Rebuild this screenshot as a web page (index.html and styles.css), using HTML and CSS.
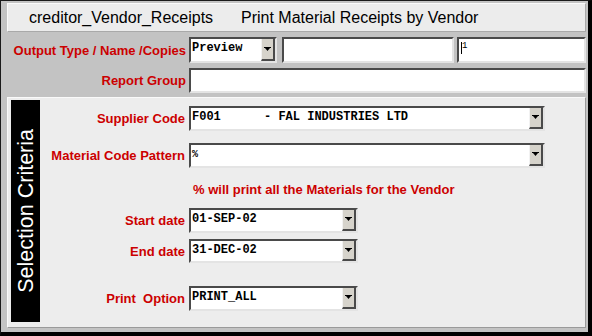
FILE: index.html
```html
<!DOCTYPE html>
<html>
<head>
<meta charset="utf-8">
<link rel="stylesheet" href="styles.css">
</head>
<body>
<div class="window">
  <div class="titlebar">
    <span class="title-main">creditor_Vendor_Receipts</span>
    <span class="title-sub">Print Material Receipts by Vendor</span>
  </div>

  <div class="top-form">
    <div class="row row-output">
      <span class="lbl lbl-top">Output Type / Name /Copies</span>
      <div class="field select f-type"><span class="val">Preview</span><span class="btn"><svg width="7" height="5" viewBox="0 0 7 5"><rect x="0" y="0" width="7" height="1" fill="#000"/><polygon points="1,1 6,1 3.5,4" fill="#000"/></svg></span></div>
      <div class="field f-name"></div>
      <div class="field f-copies"><span class="caret"></span><span class="tiny">1</span></div>
    </div>
    <div class="row row-group">
      <span class="lbl lbl-top">Report Group</span>
      <div class="field f-group"></div>
    </div>
  </div>

  <div class="panel">
    <div class="bar"><span class="bar-text">Selection Criteria</span></div>
    <div class="criteria">
      <div class="crow c-supplier">
        <span class="lbl">Supplier Code</span>
        <div class="field select f-wide"><span class="val">F001      - FAL INDUSTRIES LTD</span><span class="btn"><svg width="7" height="5" viewBox="0 0 7 5"><rect x="0" y="0" width="7" height="1" fill="#000"/><polygon points="1,1 6,1 3.5,4" fill="#000"/></svg></span></div>
      </div>
      <div class="crow c-material">
        <span class="lbl">Material Code Pattern</span>
        <div class="field select f-wide"><span class="val val-small">%</span><span class="btn"><svg width="7" height="5" viewBox="0 0 7 5"><rect x="0" y="0" width="7" height="1" fill="#000"/><polygon points="1,1 6,1 3.5,4" fill="#000"/></svg></span></div>
      </div>
      <div class="hint">% will print all the Materials for the Vendor</div>
      <div class="crow c-start">
        <span class="lbl">Start date</span>
        <div class="field select f-date"><span class="val">01-SEP-02</span><span class="btn"><svg width="7" height="5" viewBox="0 0 7 5"><rect x="0" y="0" width="7" height="1" fill="#000"/><polygon points="1,1 6,1 3.5,4" fill="#000"/></svg></span></div>
      </div>
      <div class="crow c-end">
        <span class="lbl">End date</span>
        <div class="field select f-date"><span class="val">31-DEC-02</span><span class="btn"><svg width="7" height="5" viewBox="0 0 7 5"><rect x="0" y="0" width="7" height="1" fill="#000"/><polygon points="1,1 6,1 3.5,4" fill="#000"/></svg></span></div>
      </div>
      <div class="crow c-print">
        <span class="lbl">Print&nbsp; Option</span>
        <div class="field select f-date"><span class="val">PRINT_ALL</span><span class="btn"><svg width="7" height="5" viewBox="0 0 7 5"><rect x="0" y="0" width="7" height="1" fill="#000"/><polygon points="1,1 6,1 3.5,4" fill="#000"/></svg></span></div>
      </div>
    </div>
  </div>
</div>
</body>
</html>
```

FILE: styles.css
```css
* { box-sizing: border-box; }

html, body {
  margin: 0;
  padding: 0;
  background: #000;
}

body {
  width: 592px;
  height: 336px;
  overflow: hidden;
  font-family: "Liberation Sans", Arial, sans-serif;
}

.window {
  width: 592px;
  height: 336px;
  background: #c3c3c3;
  border-top: 1px solid #1a1a1a;
  border-left: 1px solid #1a1a1a;
  border-right: 4px solid #000;
  border-bottom: 4px solid #000;
  padding: 2px 2px 4px 6px;
  display: flex;
  flex-direction: column;
}

.titlebar {
  height: 29px;
  flex: none;
  background: #ececec;
  border-top: 1px solid #fafafa;
  border-left: 1px solid #fafafa;
  border-bottom: 1px solid #a9a9a9;
  border-right: 1px solid #a9a9a9;
  display: flex;
  align-items: center;
  font-size: 16px;
  color: #000;
  padding-left: 21px;
}

.title-main { width: 212px; }

.top-form {
  margin-top: 5px;
  display: flex;
  flex-direction: column;
  gap: 5px;
}

.row {
  display: flex;
  align-items: center;
}

.row-output { height: 26px; }
.row-group { height: 25px; }

.lbl {
  color: #cc0000;
  font-weight: bold;
  font-size: 13px;
  text-align: right;
  white-space: nowrap;
  flex: none;
}

.lbl-top {
  width: 179px;
  margin-right: 3px;
}

.field {
  height: 100%;
  background: #fff;
  border-top: 2px solid #4a4a4a;
  border-left: 2px solid #4a4a4a;
  border-bottom: 2px solid #e4e4e4;
  border-right: 2px solid #e4e4e4;
  display: flex;
  align-items: flex-start;
  flex: none;
}

.select .val {
  flex: 1;
  font-family: "Liberation Mono", "Courier New", monospace;
  font-weight: bold;
  font-size: 12px;
  line-height: 14px;
  padding: 2px 0 0 1px;
  white-space: pre;
  color: #000;
}

.select .val-small {
  font-size: 10px;
  padding-top: 3px;
}

.btn {
  width: 14px;
  height: 100%;
  background: #d6d3cb;
  border-left: 1px solid #f2f2f2;
  border-right: 2px solid #4a4a4a;
  border-bottom: 2px solid #4a4a4a;
  display: flex;
  align-items: center;
  justify-content: center;
  flex: none;
}

.btn svg { display: block; }

.f-type { width: 88px; }
.f-name { width: 172px; margin-left: 5px; }
.f-copies {
  flex: 1;
  margin-left: 3px;
  align-items: flex-start;
  padding: 3px 0 0 2px;
}

.caret {
  width: 1px;
  height: 12px;
  background: #000;
}

.tiny {
  font-family: "Liberation Mono", monospace;
  font-size: 9px;
  line-height: 9px;
  color: #000;
}

.f-group { flex: 1; }

.panel {
  flex: 1;
  margin-top: 4px;
  background: #ededed;
  border-top: 1px solid #fafafa;
  border-left: 1px solid #fafafa;
  border-bottom: 1px solid #9a9a9a;
  border-right: 1px solid #9a9a9a;
  display: flex;
}

.bar {
  width: 29px;
  margin: 2px 0 5px 3px;
  background: #000;
  display: flex;
  align-items: center;
  justify-content: center;
  flex: none;
}

.bar-text {
  writing-mode: vertical-rl;
  transform: rotate(180deg);
  color: #fff;
  font-size: 21.5px;
  white-space: nowrap;
  margin-left: 1px;
}

.criteria {
  flex: 1;
  padding-top: 8px;
  display: flex;
  flex-direction: column;
}

.crow {
  display: flex;
  align-items: center;
  height: 25px;
}

.crow .lbl {
  width: 145px;
  margin-right: 4px;
}

.c-material { margin-top: 12px; }
.c-start { margin-top: 10px; height: 25px; }
.c-end { margin-top: 6px; height: 24px; }
.c-print { margin-top: 23px; }

.f-wide { width: 356px; }
.f-date { width: 169px; }

.hint {
  margin-top: 14px;
  padding-left: 153px;
  color: #cc0000;
  font-weight: bold;
  font-size: 13px;
  line-height: 16px;
  white-space: nowrap;
}
```
